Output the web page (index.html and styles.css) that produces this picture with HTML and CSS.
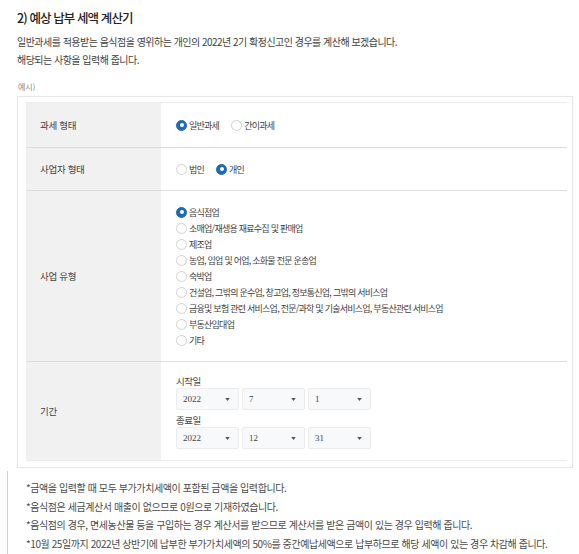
FILE: index.html
```html
<!DOCTYPE html>
<html lang="ko">
<head>
<meta charset="utf-8">
<title>예상 납부 세액 계산기</title>
<link rel="stylesheet" href="styles.css">
</head>
<body>
<div class="page">
  <h2 class="title">2) 예상 납부 세액 계산기</h2>
  <p class="desc">일반과세를 적용받는 음식점을 영위하는 개인의 2022년 2기 확정신고인 경우를 계산해 보겠습니다.<br>해당되는 사항을 입력해 줍니다.</p>
  <div class="example">예시)</div>
  <div class="box">
    <div class="table">
      <div class="row row-short">
        <div class="th">과세 형태</div>
        <div class="td inline">
          <span class="opt"><span class="radio on"></span>일반과세</span>
          <span class="opt"><span class="radio"></span>간이과세</span>
        </div>
      </div>
      <div class="row row-short2">
        <div class="th">사업자 형태</div>
        <div class="td inline">
          <span class="opt"><span class="radio"></span>법인</span>
          <span class="opt"><span class="radio on"></span>개인</span>
        </div>
      </div>
      <div class="row">
        <div class="th">사업 유형</div>
        <div class="td list">
          <span class="opt"><span class="radio on"></span>음식점업</span>
          <span class="opt"><span class="radio"></span>소매업/재생용 재료수집 및 판매업</span>
          <span class="opt"><span class="radio"></span>제조업</span>
          <span class="opt"><span class="radio"></span>농업, 임업 및 어업, 소화물 전문 운송업</span>
          <span class="opt"><span class="radio"></span>숙박업</span>
          <span class="opt"><span class="radio"></span>건설업, 그밖의 운수업, 창고업, 정보통신업, 그밖의 서비스업</span>
          <span class="opt"><span class="radio"></span>금융및 보험 관련 서비스업, 전문/과학 및 기술서비스업, 부동산관련 서비스업</span>
          <span class="opt"><span class="radio"></span>부동산임대업</span>
          <span class="opt"><span class="radio"></span>기타</span>
        </div>
      </div>
      <div class="row">
        <div class="th">기간</div>
        <div class="td period">
          <div class="plabel">시작일</div>
          <div class="selects">
            <div class="select"><span>2022</span><svg class="arr" width="6" height="4" viewBox="0 0 6 4"><path d="M0 0H6L3 4Z" fill="#555"/></svg></div>
            <div class="select"><span>7</span><svg class="arr" width="6" height="4" viewBox="0 0 6 4"><path d="M0 0H6L3 4Z" fill="#555"/></svg></div>
            <div class="select"><span>1</span><svg class="arr" width="6" height="4" viewBox="0 0 6 4"><path d="M0 0H6L3 4Z" fill="#555"/></svg></div>
          </div>
          <div class="plabel second">종료일</div>
          <div class="selects">
            <div class="select"><span>2022</span><svg class="arr" width="6" height="4" viewBox="0 0 6 4"><path d="M0 0H6L3 4Z" fill="#555"/></svg></div>
            <div class="select"><span>12</span><svg class="arr" width="6" height="4" viewBox="0 0 6 4"><path d="M0 0H6L3 4Z" fill="#555"/></svg></div>
            <div class="select"><span>31</span><svg class="arr" width="6" height="4" viewBox="0 0 6 4"><path d="M0 0H6L3 4Z" fill="#555"/></svg></div>
          </div>
        </div>
      </div>
    </div>
  </div>
</div>
<div class="notes">
  <p>*금액을 입력할 때 모두 부가가치세액이 포함된 금액을 입력합니다.</p>
  <p>*음식점은 세금계산서 매출이 없으므로 0원으로 기재하였습니다.</p>
  <p>*음식점의 경우, 면세농산물 등을 구입하는 경우 계산서를 받으므로 계산서를 받은 금액이 있는 경우 입력해 줍니다.</p>
  <p>*10월 25일까지 2022년 상반기에 납부한 부가가치세액의 50%를 중간예납세액으로 납부하므로 해당 세액이 있는 경우 차감해 줍니다.</p>
</div>
</body>
</html>
```
FILE: styles.css
```css
html, body {
  margin: 0;
  padding: 0;
  background: #fff;
}
body {
  font-family: "Noto Sans CJK KR", "Noto Sans", sans-serif;
  color: #444;
  width: 579px;
  height: 554px;
  overflow: hidden;
  display: flex;
  flex-direction: column;
}
.page {
  padding: 0 6px 0 17px;
}
.title {
  margin: 8px 0 0;
  font-size: 12.5px;
  line-height: 20px;
  font-weight: 500;
  letter-spacing: -0.9px;
  color: #222;
}
.desc {
  margin: 5px 0 0;
  font-size: 10px;
  line-height: 18px;
  letter-spacing: -0.52px;
  color: #3f3f3f;
}
.example {
  margin-top: 12px;
  font-size: 8px;
  line-height: 12px;
  color: #888;
  letter-spacing: 0;
  padding-left: 1px;
}
.box {
  margin-top: 3px;
  border: 1px solid #e8e8e8;
  padding: 5px 5px 6px 8px;
  box-shadow: 0 0 1px rgba(0,0,0,0.05);
}
.table {
  border-top: 1px solid #ececec;
  border-bottom: 1px solid #ececec;
}
.row {
  display: grid;
  grid-template-columns: 135px 1fr;
  border-top: 1px solid #dcdcdc;
}
.row:first-child {
  border-top: none;
}
.row-short { height: 44px; }
.row-short2 { height: 42px; }
.th {
  background: #f1f1f1;
  display: flex;
  align-items: center;
  padding-left: 14px;
  font-size: 9.5px;
  letter-spacing: -0.3px;
  color: #444;
}
.td {
  padding-left: 15px;
  font-size: 9px;
  letter-spacing: -0.75px;
  color: #3f3f3f;
}
.inline {
  display: flex;
  align-items: center;
  gap: 12px;
}
.list {
  display: flex;
  flex-direction: column;
  padding-top: 13px;
  padding-bottom: 13px;
}
.list .opt {
  height: 16px;
}
.opt {
  display: inline-flex;
  align-items: center;
  gap: 2px;
  white-space: nowrap;
}
.radio {
  width: 11px;
  height: 11px;
  border-radius: 50%;
  box-sizing: border-box;
  border: 1px solid #d2d2d2;
  background: #fff;
  flex: none;
  display: inline-flex;
  align-items: center;
  justify-content: center;
}
.radio.on {
  background: #1f6ab4;
  border-color: #1f6ab4;
}
.radio.on::after {
  content: "";
  width: 4px;
  height: 4px;
  border-radius: 50%;
  background: #fff;
}
.period {
  padding-top: 12px;
  padding-bottom: 11px;
  padding-left: 15px;
}
.plabel {
  font-size: 9.5px;
  line-height: 14px;
  letter-spacing: -0.5px;
  color: #444;
}
.plabel.second {
  margin-top: 3px;
}
.selects {
  display: flex;
  gap: 3px;
}
.select {
  width: 63px;
  height: 22px;
  box-sizing: border-box;
  border: 1px solid #ececec;
  border-radius: 2px;
  background: #f8f9fa;
  display: flex;
  align-items: center;
  justify-content: space-between;
  padding: 0 8px 0 6px;
  font-family: "Liberation Serif", "Times New Roman", serif;
  font-size: 9px;
  letter-spacing: 0;
  color: #444;
}
.arr {
  width: 5px;
  height: 3px;
}
.notes {
  flex: 1;
  margin: 3px 0 0 7px;
  border-left: 1px solid #cfcfcf;
  padding: 8px 0 0 18px;
}
.notes p {
  margin: 0;
  font-size: 10px;
  line-height: 18.7px;
  letter-spacing: -0.42px;
  color: #4a4a4a;
  white-space: nowrap;
}
```
